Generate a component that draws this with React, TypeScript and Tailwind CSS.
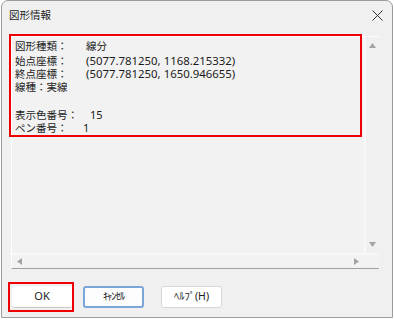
const rows: [string, string][] = [
  ["図形種類：", "線分"],
  ["始点座標：", "(5077.781250, 1168.215332)"],
  ["終点座標：", "(5077.781250, 1650.946655)"],
];

function Tri({ dir }: { dir: "up" | "down" | "left" | "right" }) {
  const pts = {
    up: "0,5 3.5,0 7,5",
    down: "0,0 7,0 3.5,5",
    left: "5,0 5,7 0,3.5",
    right: "0,0 5,3.5 0,7",
  }[dir];
  const w = dir === "up" || dir === "down" ? 7 : 5;
  const h = dir === "up" || dir === "down" ? 5 : 7;
  return (
    <svg width={w} height={h} viewBox={`0 0 ${w} ${h}`}>
      <polygon points={pts} fill="#a3a3a3" />
    </svg>
  );
}

export default function App() {
  return (
    <div
      className="w-[394px] h-[320px] bg-white pt-0"
      style={{ fontFamily: '"Noto Sans", "Noto Sans CJK JP", sans-serif' }}
    >
      <div className="ml-[1px] w-[392px] h-[318px] border border-[#9c9c9c] rounded-t-[7px] bg-[#f0f0f0] flex flex-col text-[#1c1c1c]">
        {/* title bar */}
        <div className="h-[35px] flex items-start justify-between pl-[7px] pr-[9px] pt-[7px]">
          <span className="text-[10.5px] leading-[14px]">図形情報</span>
          <svg width="11" height="11" viewBox="0 0 11 11" className="mt-[2px]">
            <path d="M0.5 0.5 L10.5 10.5 M10.5 0.5 L0.5 10.5" stroke="#333" strokeWidth="1" />
          </svg>
        </div>

        {/* text area */}
        <div className="relative ml-[9px] w-[368px] h-[233px] bg-[#f2f2f2] border-t border-l border-white border-b border-b-[#a0a0a0] flex flex-col">
          <div className="flex flex-1">
            <div className="flex-1 pl-[3px] pt-[3px] text-[10.5px] leading-[13.5px]">
              {rows.map(([k, v]) => (
                <div key={k} className="flex items-baseline h-[13.5px]">
                  <span className="w-[71px]">{k}</span>
                  <span className={v.startsWith("(") ? "text-[11.4px]" : ""}>{v}</span>
                </div>
              ))}
              <div className="h-[13.5px]">線種：実線</div>
              <div className="h-[13.5px]" />
              <div className="flex items-baseline h-[13.5px]">
                <span className="w-[75px]">表示色番号：</span>
                <span className="text-[11px]">15</span>
              </div>
              <div className="flex items-baseline h-[13.5px]">
                <span className="w-[68px]">ペン番号：</span>
                <span className="text-[11px]">1</span>
              </div>
            </div>
            <div className="w-[14px] bg-[#f0f0f0] border-l-2 border-[#f8f8f8] flex flex-col items-center justify-between py-[6px] mr-[1px]">
              <Tri dir="up" />
              <Tri dir="down" />
            </div>
          </div>
          <div className="h-[15px] border-t-2 border-[#f8f8f8] flex">
            <div className="flex-1 flex items-center justify-between px-[5px]">
              <Tri dir="left" />
              <Tri dir="right" />
            </div>
            <div className="w-[15px]" />
          </div>

          {/* red annotation */}
          <div className="absolute left-[-3px] top-[-3px] w-[353px] h-[103px] border-2 border-[#ee0000] pointer-events-none" />
        </div>

        {/* buttons */}
        <div className="flex items-start mt-[17px] pl-[10px] text-[10.5px]">
          <div className="relative w-[60px] h-[22px] bg-white border-b border-[#c8c8c8] flex items-center justify-center rounded-[3px] text-[11px]">
            OK
            <div className="absolute left-[-4px] top-[-4px] w-[66px] h-[30px] border-2 border-[#ee0000]" />
          </div>
          <div className="ml-[11px] w-[61px] h-[22px] bg-[#fdfdfd] border-2 border-[#7aa6d8] rounded-[3px] flex items-center justify-center tracking-[-1px]">
            ｷｬﾝｾﾙ
          </div>
          <div className="ml-[17px] w-[61px] h-[22px] bg-white border border-[#d6d6d6] rounded-[3px] flex items-center justify-center">
            ﾍﾙﾌﾟ(H)
          </div>
        </div>
      </div>
    </div>
  );
}
